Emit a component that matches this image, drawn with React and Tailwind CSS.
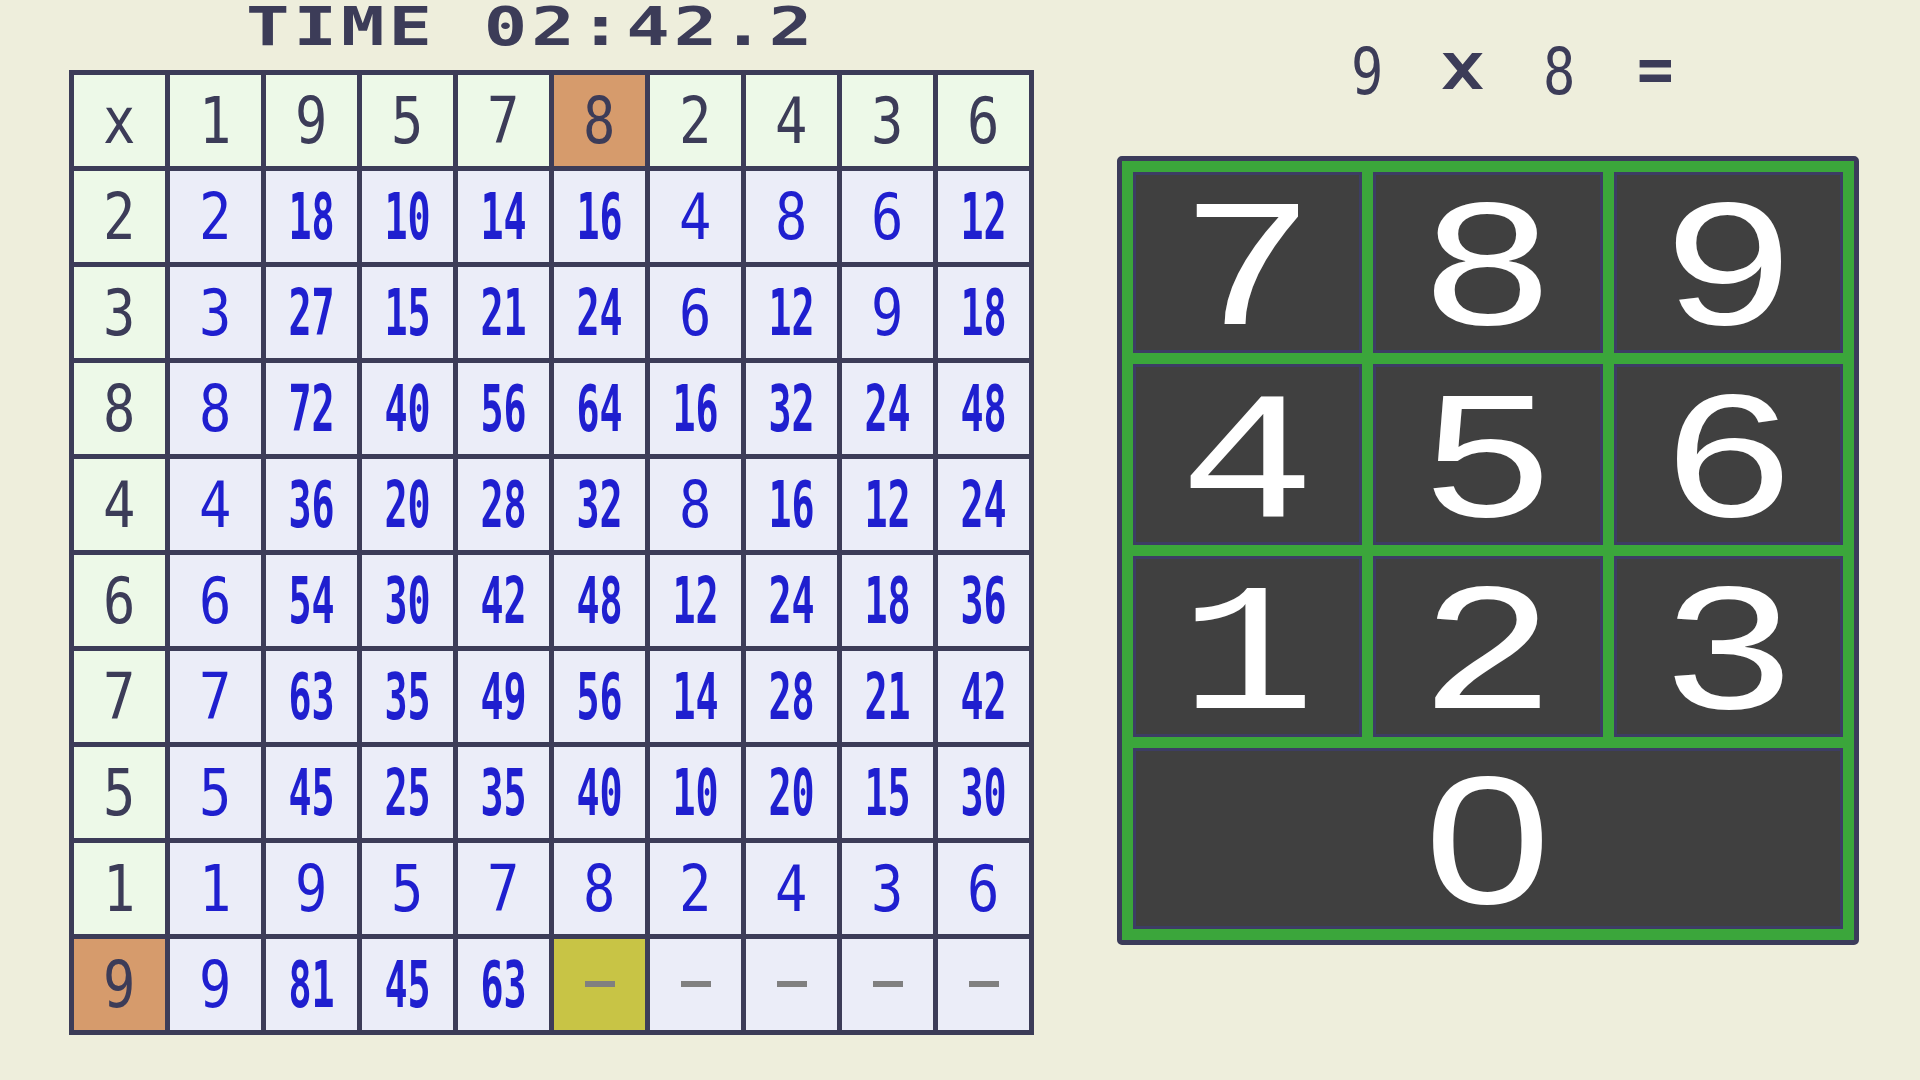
import React from "react";

const cols = [1, 9, 5, 7, 8, 2, 4, 3, 6];
const rows = [2, 3, 8, 4, 6, 7, 5, 1, 9];

function Num({ v, className = "" }) {
  const s = String(v);
  if (s.length > 1) {
    return <span className={"inline-block scale-x-[0.6] font-bold " + className}>{s}</span>;
  }
  return <span className={"inline-block scale-x-[0.84] " + className}>{s}</span>;
}

function Cell({ bg, children }) {
  return (
    <div className={"flex items-center justify-center w-[91px] h-[91px] " + bg}>
      {children}
    </div>
  );
}

function Table() {
  const cells = [];
  cells.push(
    <Cell key="h-x" bg="bg-[#edf9e8]">
      <Num v="x" className="text-[#3c3c58]" />
    </Cell>
  );
  cols.forEach((c, i) => {
    cells.push(
      <Cell key={"h" + i} bg={c === 8 ? "bg-[#d69b6c]" : "bg-[#edf9e8]"}>
        <Num v={c} className="text-[#3c3c58]" />
      </Cell>
    );
  });
  rows.forEach((r, ri) => {
    const last = ri === rows.length - 1;
    cells.push(
      <Cell key={"r" + ri} bg={last ? "bg-[#d69b6c]" : "bg-[#edf9e8]"}>
        <Num v={r} className="text-[#3c3c58]" />
      </Cell>
    );
    cols.forEach((c, ci) => {
      if (last && ci >= 4) {
        cells.push(
          <Cell key={"c" + ri + "-" + ci} bg={ci === 4 ? "bg-[#c8c445]" : "bg-[#ebedf8]"}>
            <div className="w-[30px] h-[6px] bg-[#808080] -translate-y-[1px]" />
          </Cell>
        );
      } else {
        cells.push(
          <Cell key={"c" + ri + "-" + ci} bg="bg-[#ebedf8]">
            <Num v={r * c} className="text-[#1f1fcf]" />
          </Cell>
        );
      }
    });
  });
  return (
    <div className="grid grid-cols-10 gap-[5px] p-[5px] bg-[#3c3c58] w-[965px] text-[64px] leading-none font-['DejaVu_Sans_Mono',monospace]">
      {cells}
    </div>
  );
}

function Key({ d, wide }) {
  const font =
    d === "0"
      ? "font-['Liberation_Sans',sans-serif] translate-y-[1px]"
      : "font-['Liberation_Mono',monospace] translate-y-[13px]";
  return (
    <div
      className={
        "flex items-center justify-center border-[3px] border-[#3d3d64] bg-[#404040] " +
        (wide ? "col-span-3" : "")
      }
    >
      <span className={"inline-block scale-x-[1.25] text-white text-[182px] leading-[150px] " + font}>
        {d}
      </span>
    </div>
  );
}

export default function App() {
  return (
    <div className="w-[1920px] h-[1080px] bg-[#eeeedc] flex overflow-hidden">
      <div className="flex flex-col pl-[69px]">
        <div className="h-[70px]">
          <div className="ml-[177px] inline-block origin-left scale-x-[1.35] text-[53.5px] leading-none font-bold tracking-[3px] whitespace-pre text-[#3c3c58] font-['DejaVu_Sans_Mono',monospace]">
            TIME 02:42.2
          </div>
        </div>
        <Table />
      </div>
      <div className="flex flex-col ml-[83px]">
        <div className="h-[156px]">
          <div className="flex items-center pl-[202px] mt-[40px] h-[64px] text-[#3c3c58] font-['DejaVu_Sans_Mono',monospace]">
            <div className="w-[96px] flex justify-center text-[64px] leading-none">
              <span className="inline-block scale-x-[0.84]">9</span>
            </div>
            <div className="w-[96px] flex justify-center text-[49px] leading-none font-bold">
              <span className="inline-block scale-x-[1.45]">X</span>
            </div>
            <div className="w-[96px] flex justify-center text-[64px] leading-none">
              <span className="inline-block scale-x-[0.84]">8</span>
            </div>
            <div className="w-[96px] flex justify-center text-[64px] leading-none font-bold">
              <span className="inline-block scale-x-[0.95] -translate-y-[3px]">=</span>
            </div>
          </div>
        </div>
        <div className="w-[742px] h-[789px] border-[5px] border-[#3b3b5a] rounded-[5px] bg-[#3ba63b] p-[11px] grid grid-cols-3 grid-rows-4 gap-[11px]">
          {["7", "8", "9", "4", "5", "6", "1", "2", "3"].map((d) => (
            <Key key={d} d={d} />
          ))}
          <Key d="0" wide />
        </div>
      </div>
    </div>
  );
}
